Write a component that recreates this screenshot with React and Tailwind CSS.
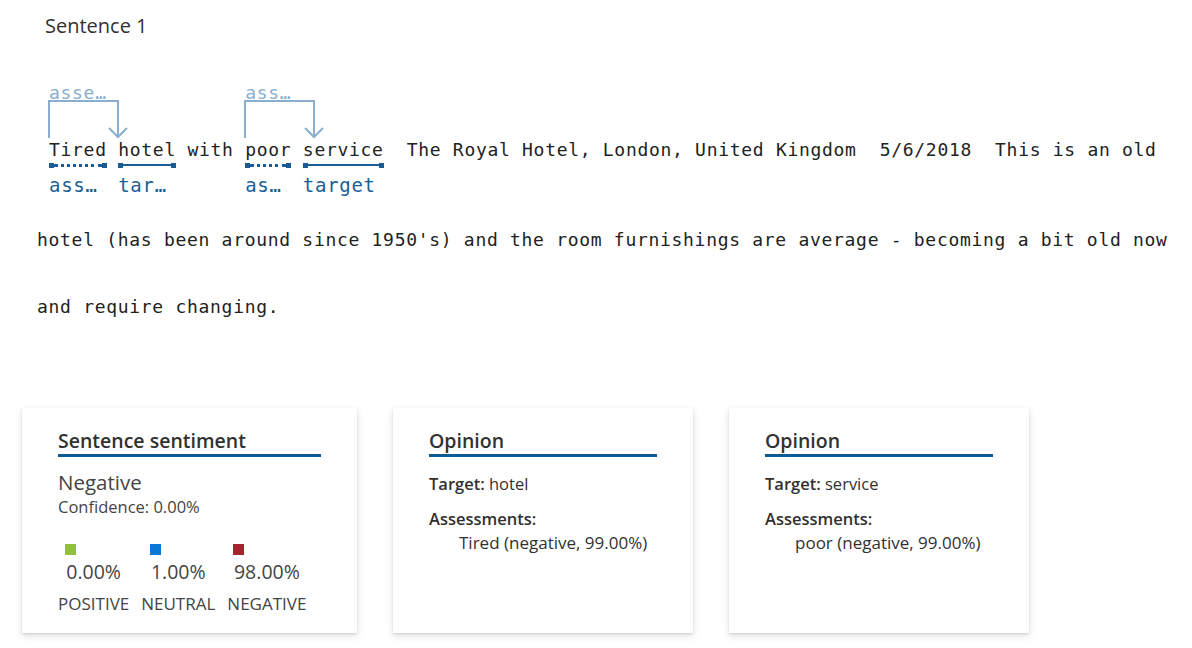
import React from "react";

const MONO = "font-['DejaVu_Sans_Mono',monospace] text-[18px] tracking-[0.7px] whitespace-pre";
const SANS = "font-['Open_Sans',sans-serif]";

function Bracket({ width }) {
  return (
    <svg width={width + 14} height="40" className="block -ml-[2px]" viewBox={`0 0 ${width + 14} 40`}>
      <path d={`M2 39 V2 H${width + 2} V38`} fill="none" stroke="#8aaecd" strokeWidth="2" />
      <path d={`M${width - 7} 29 L${width + 2} 38 L${width + 11} 29`} fill="none" stroke="#8aaecd" strokeWidth="2" />
    </svg>
  );
}

function Underline({ dotted }) {
  return (
    <div className="flex items-center h-[6px] w-full">
      <div className="w-[5px] h-[5px] bg-[#1b5c96]" />
      <div
        className={
          dotted
            ? "flex-1 h-0 border-t-[3px] border-dotted border-[#1b5c96]"
            : "flex-1 h-[2px] bg-[#1b5c96]"
        }
      />
      <div className="w-[5px] h-[5px] bg-[#1b5c96]" />
    </div>
  );
}

function Token({ word, label, dotted }) {
  return (
    <div className="flex flex-col">
      <div className="h-[22px] leading-[22px] text-[#222]">{word}</div>
      <div className="h-[8px] pt-[1px]">
        <Underline dotted={dotted} />
      </div>
      <div className="text-[19px] leading-[26px] text-[#1c5f97] mt-[3px]">{label}</div>
    </div>
  );
}

function Group({ topLabel, a, b }) {
  return (
    <div className="flex flex-col">
      <div className="h-[18px] leading-[18px] text-[#8aaecd] text-[18px] pt-[3px]">{topLabel}</div>
      <Bracket width={69} />
      <div className="flex">
        <Token word={a.word} label={a.label} dotted />
        <div className="h-[22px] leading-[22px]"> </div>
        <Token word={b.word} label={b.label} />
      </div>
    </div>
  );
}

function Plain({ text }) {
  return <div className="pt-[58px] h-[80px] leading-[22px] text-[#222]">{text}</div>;
}

function Card({ width, title, children }) {
  return (
    <div
      className={`${width} h-[225px] bg-white px-[36px] pt-[20px] shadow-[0_3.2px_7.2px_0_rgba(0,0,0,0.13),0_0.6px_1.8px_0_rgba(0,0,0,0.11)]`}
    >
      <div className="text-[19.5px] leading-[26px] font-semibold text-[#323130] border-b-[3px] border-[#0e5a94]">
        {title}
      </div>
      {children}
    </div>
  );
}

function Score({ color, value, label }) {
  return (
    <div className="flex flex-col items-center">
      <div className="flex flex-col">
        <div className={`w-[11px] h-[11px] ${color} -ml-[1px]`} />
        <div className="text-[19.5px] leading-[24px] text-[#444] mt-[5px]">{value}</div>
      </div>
      <div className="text-[17px] leading-[20px] text-[#444] mt-[10px]">{label}</div>
    </div>
  );
}

export default function App() {
  return (
    <div className={`w-[1192px] h-[648px] bg-white overflow-hidden ${SANS}`}>
      <div className="pl-[45px] pt-[12px] text-[20px] leading-[28px] text-[#323130]">Sentence 1</div>

      <div className={`${MONO} mt-[41px] pl-[49px] flex items-start`}>
        <Group topLabel="asse…" a={{ word: "Tired", label: "ass…" }} b={{ word: "hotel", label: "tar…" }} />
        <Plain text=" with " />
        <Group topLabel="ass…" a={{ word: "poor", label: "as…" }} b={{ word: "service", label: "target" }} />
        <Plain text="  The Royal Hotel, London, United Kingdom  5/6/2018  This is an old" />
      </div>

      <div className={`${MONO} pl-[37px] mt-[31px] leading-[22px] text-[#222]`}>
        hotel (has been around since 1950's) and the room furnishings are average - becoming a bit old now
      </div>
      <div className={`${MONO} pl-[37px] mt-[45px] leading-[22px] text-[#222]`}>and require changing.</div>

      <div className="flex gap-[36px] pl-[22px] mt-[90px]">
        <Card width="w-[335px]" title="Sentence sentiment">
          <div className="text-[20.5px] leading-[26px] text-[#444] mt-[12px]">Negative</div>
          <div className="text-[16.5px] leading-[20px] text-[#444] mt-[2px]">Confidence: 0.00%</div>
          <div className="flex gap-[12px] mt-[27px]">
            <Score color="bg-[#92c13e]" value="0.00%" label="POSITIVE" />
            <Score color="bg-[#0c78d5]" value="1.00%" label="NEUTRAL" />
            <Score color="bg-[#a4262c]" value="98.00%" label="NEGATIVE" />
          </div>
        </Card>
        <Card width="w-[300px]" title="Opinion">
          <div className="text-[16.5px] leading-[22px] text-[#323130] mt-[16px]">
            <span className="font-semibold">Target:</span> hotel
          </div>
          <div className="text-[16.5px] leading-[22px] text-[#323130] mt-[13px] font-semibold">Assessments:</div>
          <div className="text-[17px] leading-[22px] text-[#323130] pl-[30px] mt-[2px]">Tired (negative, 99.00%)</div>
        </Card>
        <Card width="w-[300px]" title="Opinion">
          <div className="text-[16.5px] leading-[22px] text-[#323130] mt-[16px]">
            <span className="font-semibold">Target:</span> service
          </div>
          <div className="text-[16.5px] leading-[22px] text-[#323130] mt-[13px] font-semibold">Assessments:</div>
          <div className="text-[17px] leading-[22px] text-[#323130] pl-[30px] mt-[2px]">poor (negative, 99.00%)</div>
        </Card>
      </div>
    </div>
  );
}
